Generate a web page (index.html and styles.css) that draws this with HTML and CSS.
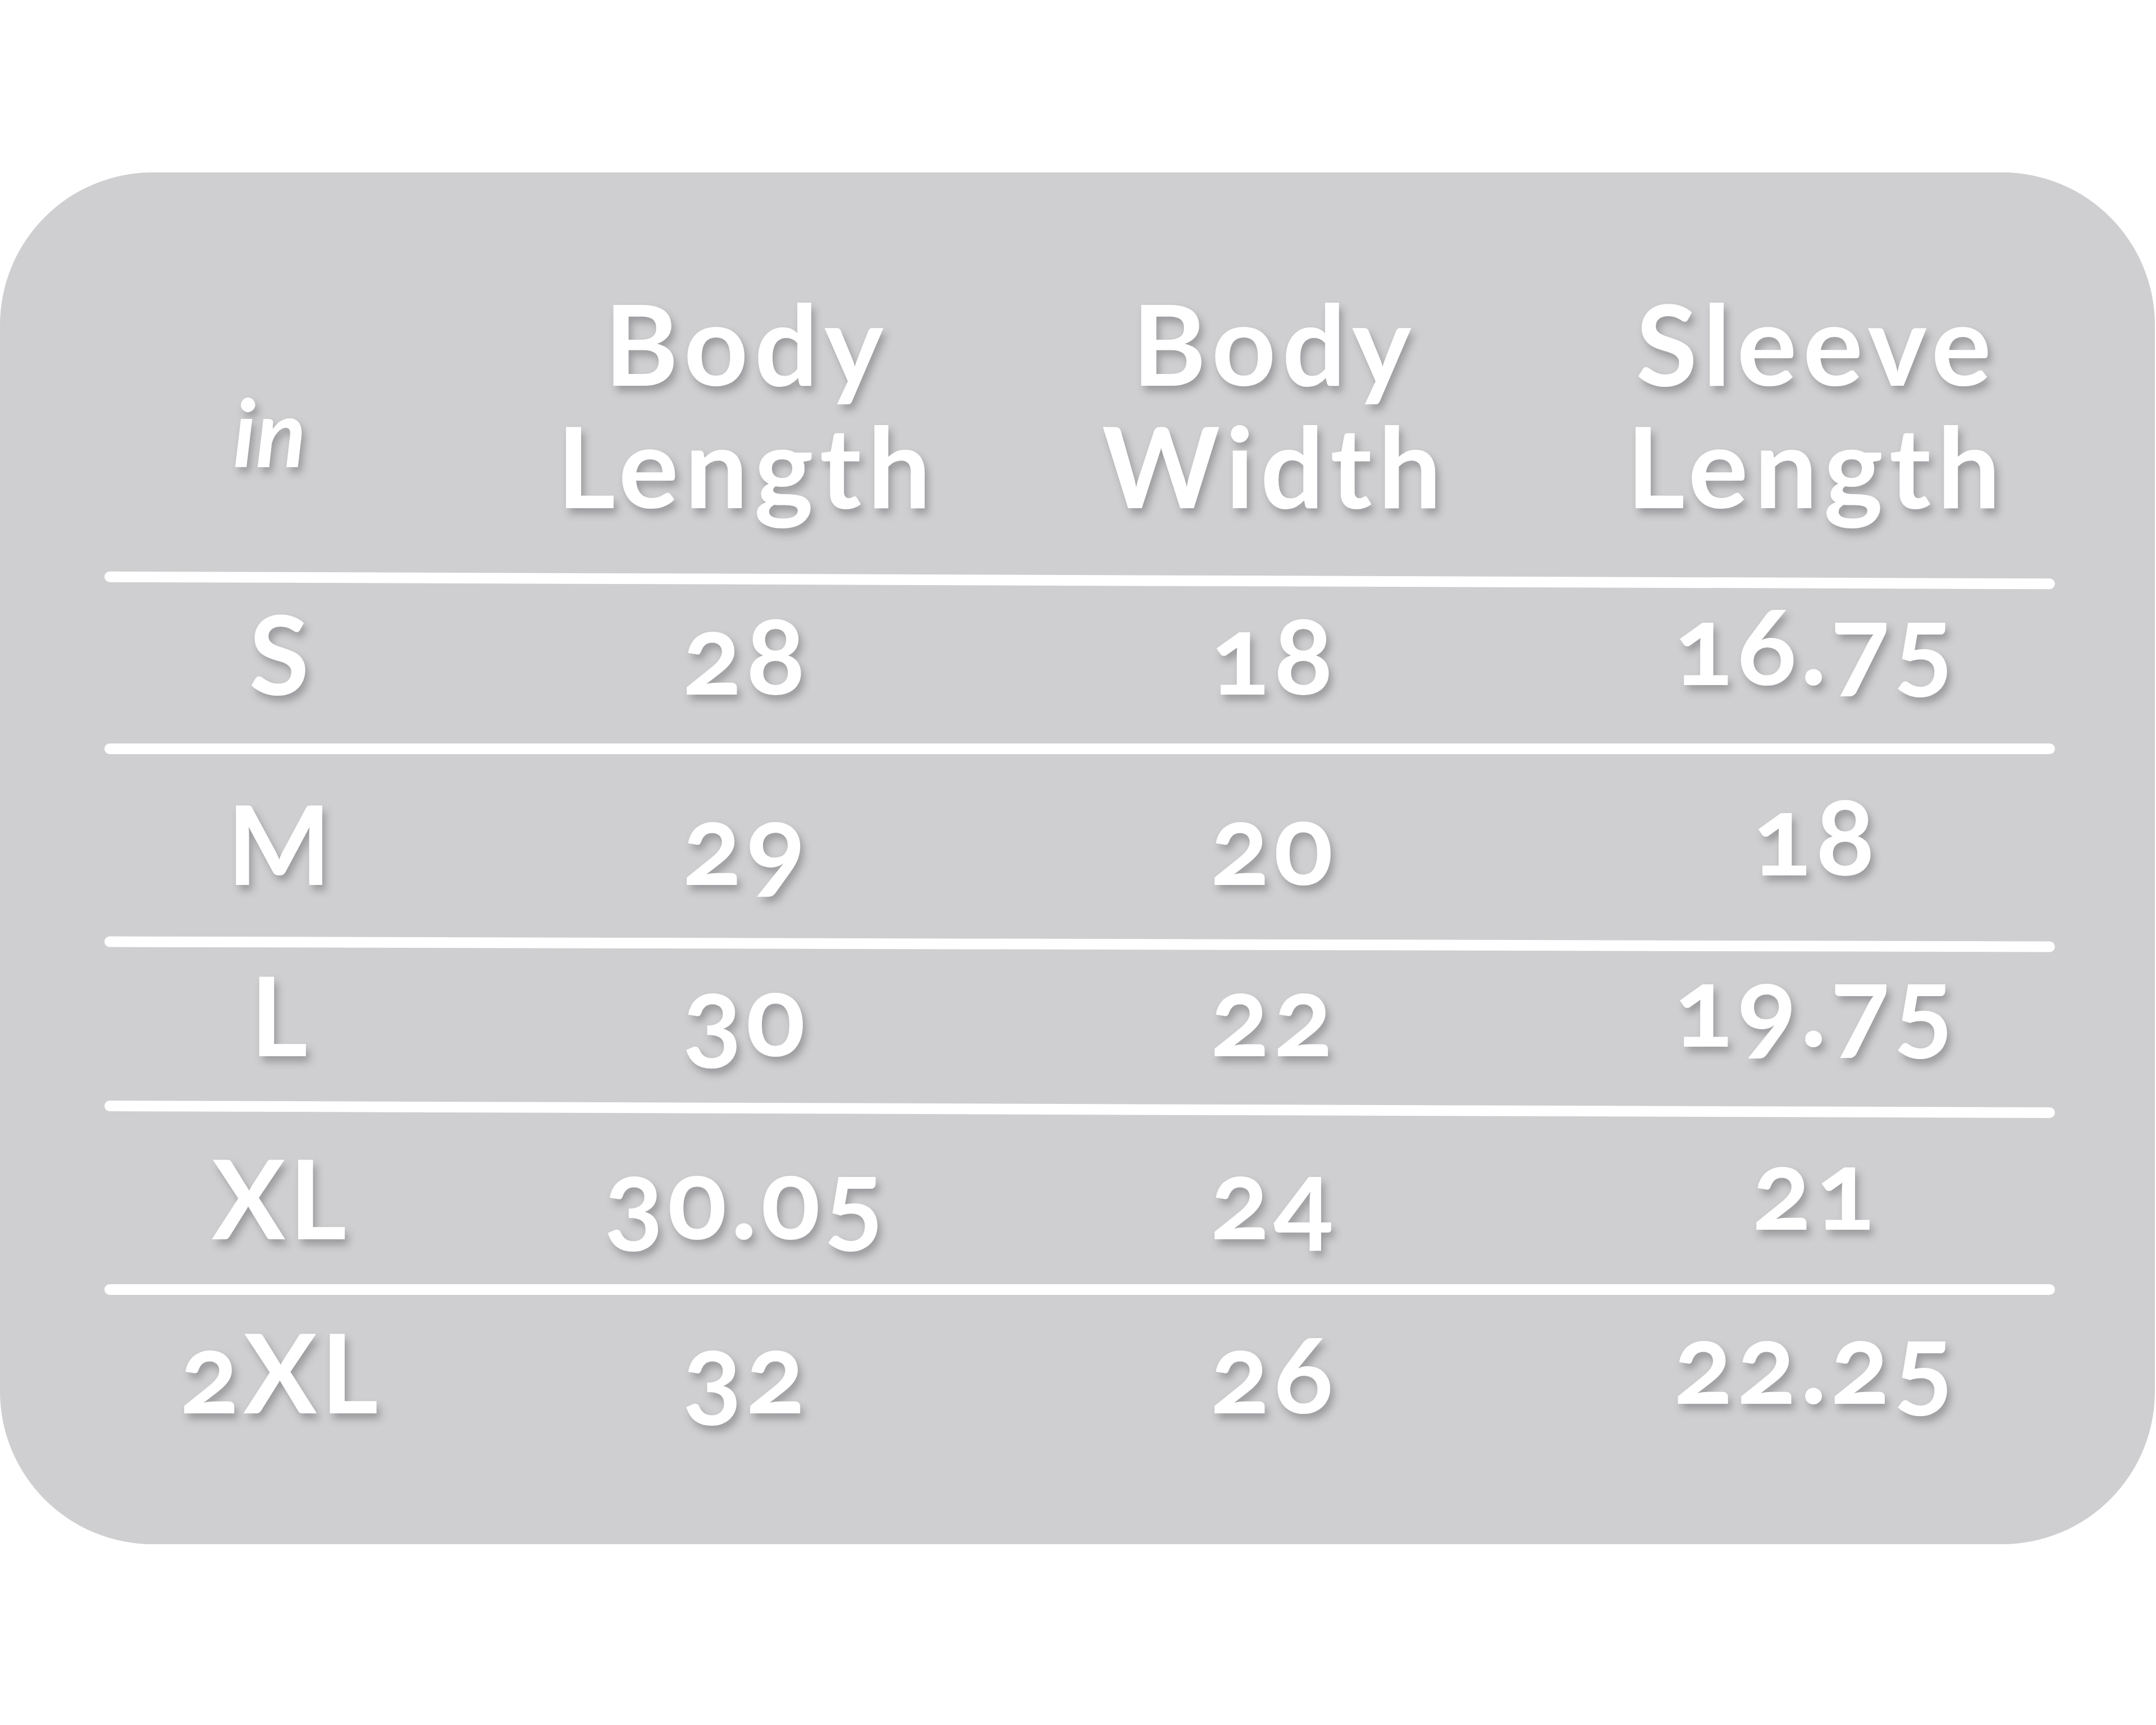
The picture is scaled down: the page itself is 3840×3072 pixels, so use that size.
FILE: index.html
```html
<!DOCTYPE html>
<html lang="en">
<head>
<meta charset="utf-8">
<title>Size chart</title>
<link rel="stylesheet" href="styles.css">
</head>
<body>
<div class="card">
  <div class="table">
    <div class="grid head">
      <div class="cell unit">in</div>
      <div class="cell hd">Body<br>Length</div>
      <div class="cell hd">Body<br>Width</div>
      <div class="cell hd sleeve">Sleeve<br>Length</div>
    </div>
    <div class="rule tilt-a"></div>
    <div class="grid row row-s">
      <div class="cell">S</div><div class="cell">28</div><div class="cell">18</div><div class="cell sleeve">16.75</div>
    </div>
    <div class="rule"></div>
    <div class="grid row row-m">
      <div class="cell">M</div><div class="cell">29</div><div class="cell">20</div><div class="cell sleeve">18</div>
    </div>
    <div class="rule tilt-b"></div>
    <div class="grid row row-l">
      <div class="cell">L</div><div class="cell">30</div><div class="cell">22</div><div class="cell sleeve">19.75</div>
    </div>
    <div class="rule tilt-c"></div>
    <div class="grid row row-xl">
      <div class="cell">XL</div><div class="cell">30.05</div><div class="cell">24</div><div class="cell sleeve">21</div>
    </div>
    <div class="rule"></div>
    <div class="grid row row-2xl">
      <div class="cell">2XL</div><div class="cell">32</div><div class="cell">26</div><div class="cell sleeve">22.25</div>
    </div>
  </div>
</div>
</body>
</html>
```
FILE: styles.css
```css
html, body {
  margin: 0;
  padding: 0;
  background: #ffffff;
}

body {
  font-family: "Lato", "Noto Sans", "DejaVu Sans", sans-serif;
  color: #ffffff;
}

.card {
  margin-top: 307px;
  width: 3838px;
  height: 2443px;
  box-sizing: border-box;
  background: #cfcfd1;
  border-radius: 272px;
  padding-left: 186px;
}

.table {
  width: 3474px;
  display: flex;
  flex-direction: column;
}

.grid {
  display: grid;
  grid-template-columns: 622px 1034px 846px 972px;
}

.cell {
  text-align: center;
  font-weight: 700;
  font-variant-numeric: oldstyle-nums;
  text-shadow: 6px 10px 14px rgba(60, 60, 66, 0.35);
  white-space: nowrap;
}

.sleeve {
  padding-left: 112px;
}

.head {
  height: 717px;
  box-sizing: border-box;
  padding-bottom: 87px;
  align-items: end;
}

.hd {
  font-size: 200px;
  line-height: 218px;
  letter-spacing: 11px;
  padding-left: 11px;
}

.hd.sleeve {
  padding-left: 123px;
}

.unit {
  font-size: 166px;
  line-height: 166px;
  font-style: italic;
  font-weight: 700;
  padding-right: 34px;
  margin-bottom: 86px;
}

.rule {
  height: 19px;
  background: #ffffff;
  border-radius: 10px;
}

.tilt-a { transform: rotate(0.21deg); }
.tilt-b { transform: rotate(0.15deg); }
.tilt-c { transform: rotate(0.2deg); }

.row {
  box-sizing: border-box;
  align-items: start;
  font-size: 196px;
  line-height: 196px;
  letter-spacing: 7px;
}

.row .cell {
  padding-left: 7px;
}

.row .sleeve {
  margin-top: -17px;
  padding-left: 119px;
}

.row-s { height: 281px; padding-top: 21px; }
.row-m { height: 329px; padding-top: 60px; }
.row-l { height: 275px; padding-top: 17px; }
.row-xl { height: 302px; padding-top: 49px; }
.row-2xl { padding-top: 38px; }
```
